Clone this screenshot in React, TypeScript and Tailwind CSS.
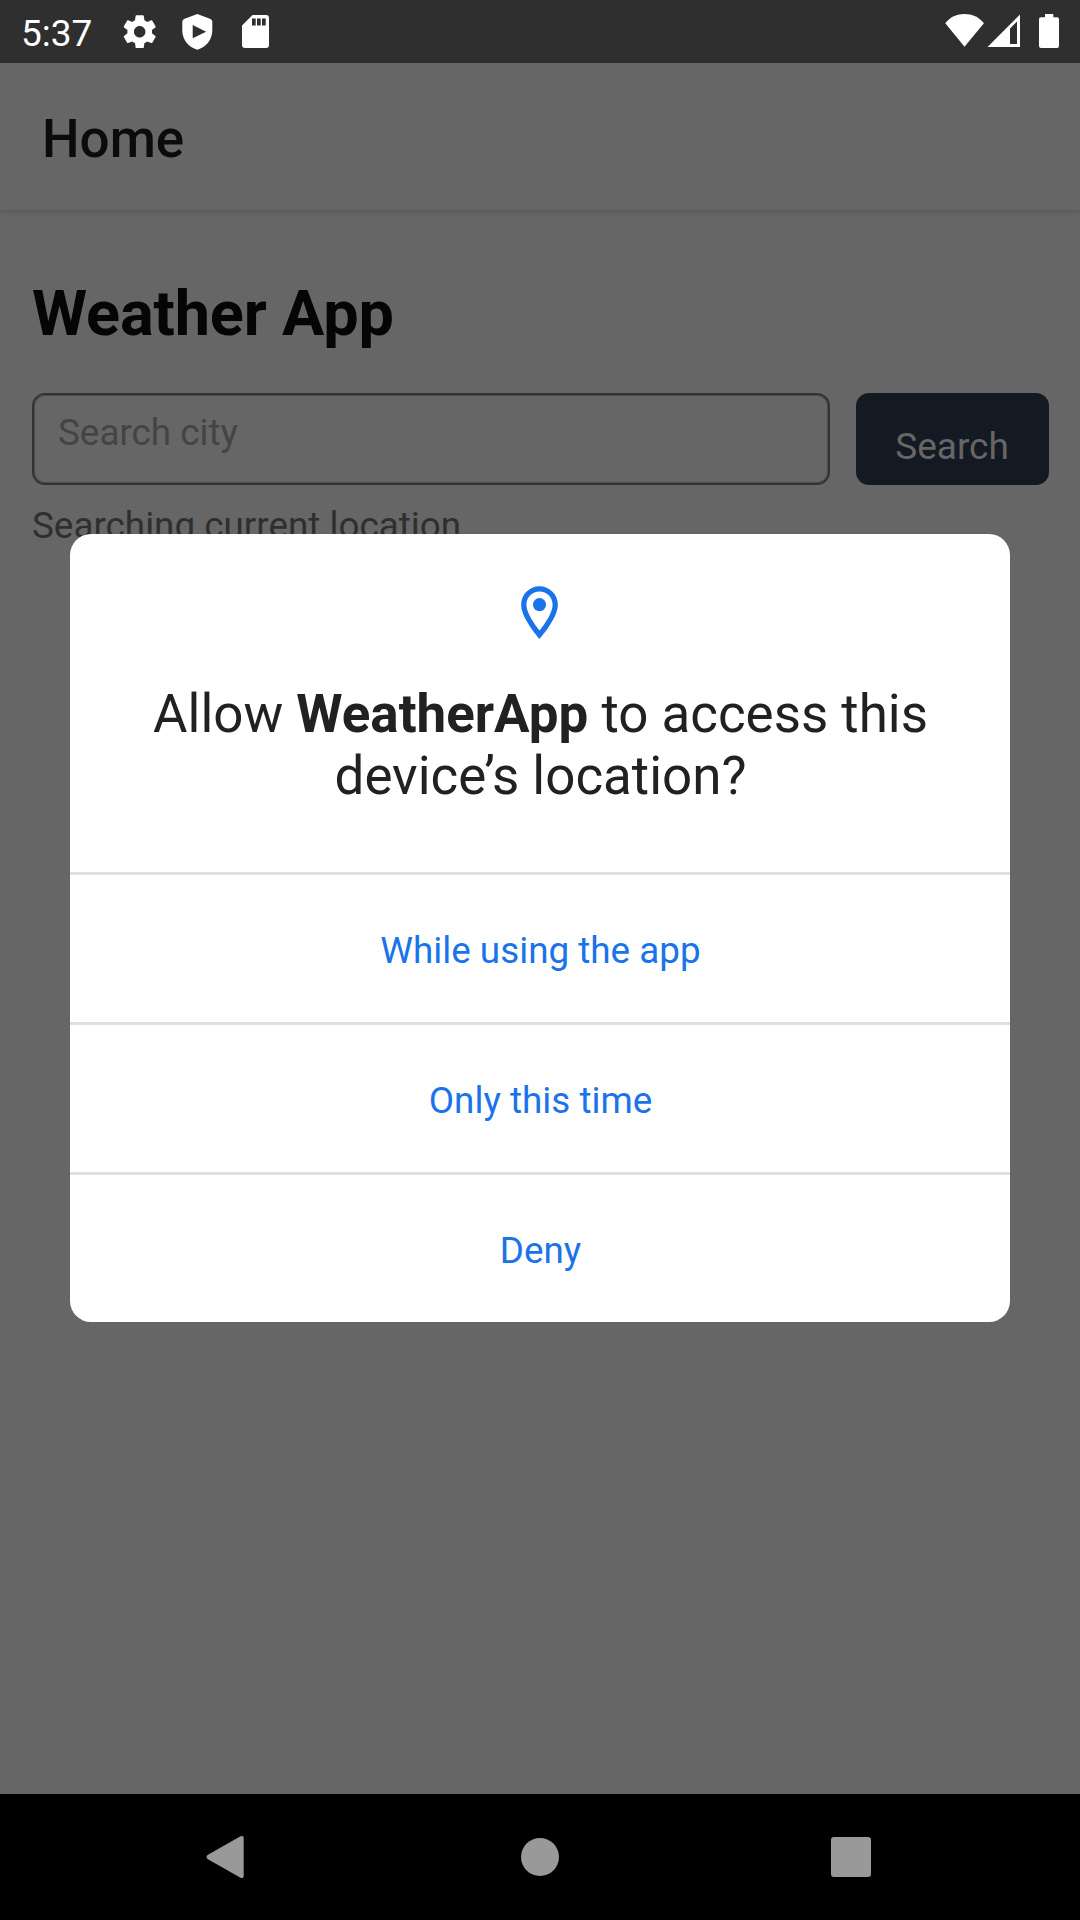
function StatusBar() {
  return (
    <div className="flex h-[63px] shrink-0 items-start bg-[#2f2f2f] text-white">
      <span className="w-[100px] pt-[2px] pl-[21px] text-[37px] leading-[63px]">5:37</span>
      <svg className="mt-3 ml-5 size-[39.4px]" viewBox="0 0 24 24" fill="currentColor">
        <path d="M19.430 12.980c.040-.320.070-.640.070-.980s-.030-.660-.070-.980l2.110-1.650c.190-.150.240-.420.120-.640l-2-3.460c-.120-.220-.390-.300-.610-.220l-2.490 1c-.520-.400-1.080-.730-1.690-.980l-.380-2.650C14.460 2.180 14.250 2 14 2h-4c-.250 0-.460.180-.490.420l-.380 2.650c-.610.250-1.170.590-1.690.980l-2.490-1c-.230-.090-.490 0-.610.220l-2 3.460c-.130.220-.070.490.120.640l2.110 1.650c-.040.320-.070.650-.070.980s.030.660.070.980l-2.110 1.650c-.190.150-.240.420-.120.640l2 3.460c.120.220.390.300.610.220l2.490-1c.520.400 1.080.730 1.690.980l.380 2.650c.030.240.240.420.490.420h4c.250 0 .460-.180.490-.420l.380-2.650c.610-.250 1.170-.590 1.690-.980l2.490 1c.230.090.490 0 .610-.220l2-3.460c.120-.220.070-.490-.120-.640l-2.110-1.650zM12 15.500c-1.930 0-3.500-1.570-3.500-3.500s1.570-3.500 3.500-3.500 3.500 1.570 3.500 3.500-1.570 3.500-3.500 3.500z" />
      </svg>
      <svg className="mt-[13px] ml-[22px] h-[38px] w-[32px]" viewBox="0 0 32 38" fill="currentColor">
        <path
          fillRule="evenodd"
          d="M16.3 1 29.5 6Q31.3 7 31.3 8.500V17.500C31.300 26.500 25 34.500 16.300 36.700C7.600 34.500 1.300 26.500 1.300 17.500V8.500Q1.300 7 3 6ZM11.700 12V25.300L25.100 18.700Z"
        />
      </svg>
      <svg className="mt-[14px] ml-[28px] h-[36px] w-[30px]" viewBox="0 0 30 36" fill="currentColor">
        <path
          fillRule="evenodd"
          d="M11.500 1H25.200Q28 1 28 4V31Q28 34 25.200 34H4Q1 34 1 31V11.500ZM11 4.500V11.600H14.700V4.500ZM16 4.500V11.600H19.700V4.500ZM21 4.500V11.600H24.700V4.500Z"
        />
      </svg>
      <svg className="mt-[13px] ml-auto h-[36px] w-[40px]" viewBox="0 0 40 36" fill="currentColor">
        <path d="M0.300 10.300C5 4 12 1 19.500 1S34 4 38.900 10.300L19.500 33.800Z" />
      </svg>
      <svg className="mt-[13px] ml-[2px] h-[36px] w-[34px]" viewBox="0 0 34 36" fill="currentColor">
        <path fillRule="evenodd" d="M0.500 34H33V1.500ZM23 31V15.500L30 8.500V31Z" />
      </svg>
      <svg className="mt-[13px] mr-5 ml-[17px] h-[36px] w-[22px]" viewBox="0 0 22 36" fill="currentColor">
        <path d="M7 1H15.300V4.300H19Q21 4.300 21 6.300V33Q21 35 19 35H3Q1 35 1 33V6.300Q1 4.300 3 4.300H7Z" />
      </svg>
    </div>
  );
}

function PermissionDialog() {
  const choices = ["While using the app", "Only this time", "Deny"];
  return (
    <div className="absolute top-[534px] left-[70px] flex w-[940px] flex-col overflow-hidden rounded-[21px] bg-white">
      <div className="flex h-[338px] flex-col items-center pt-[47px]">
        <svg className="mr-px size-[63px]" viewBox="0 0 24 24" fill="#1a73e8">
          <path d="M12 2C8.130 2 5 5.130 5 9c0 5.250 7 13 7 13s7-7.750 7-13c0-3.870-3.130-7-7-7zM7 9c0-2.760 2.240-5 5-5s5 2.240 5 5c0 2.880-2.880 7.190-5 9.880C9.920 16.210 7 11.850 7 9z" />
          <circle cx="12" cy="9" r="2.5" />
        </svg>
        <h2 className="mt-[39px] pl-px text-center text-[52.9px] leading-[62px] text-[#212121]">
          Allow <strong className="font-bold">WeatherApp</strong> to access this
          <br />
          device’s location?
        </h2>
      </div>
      {choices.map((label) => (
        <button
          key={label}
          className="h-[150px] border-t-[3px] border-[#e0e0e0] pt-[4px] pl-px text-[36.85px] leading-[42px] text-[#1a73e8]"
        >
          {label}
        </button>
      ))}
    </div>
  );
}

function NavigationBar() {
  return (
    <div className="flex h-[126px] shrink-0 items-center justify-between bg-black px-[205px] text-[#999]">
      <svg className="h-[44px] w-[40px]" viewBox="0 0 40 44" fill="currentColor">
        <path d="M2.500 20 35.500 1.300Q38.700 0 38.700 3V41Q38.700 44 35.500 42.700L2.500 24Q0.500 22 2.500 20Z" />
      </svg>
      <div className="ml-[4px] size-[38px] rounded-full bg-[#999]" />
      <div className="mr-[4px] size-[40px] rounded-[3px] bg-[#999]" />
    </div>
  );
}

export default function App() {
  return (
    <div className="relative flex h-[1920px] w-[1080px] flex-col overflow-hidden bg-[#666] font-['Roboto',sans-serif]">
      <StatusBar />
      <header className="flex h-[147px] shrink-0 items-center pl-[42px] shadow-[0_1px_5px_rgba(0,0,0,0.2)]">
        <h1 className="pt-[5px] text-[53px] leading-[62px] font-medium text-[#0b0b0b]">Home</h1>
      </header>
      <main className="flex flex-1 flex-col px-8 pt-[67px]">
        <h2 className="text-[63px] leading-[74px] font-bold tracking-[-0.15px] text-[#050505]">Weather App</h2>
        <div className="mt-[42px] flex h-[92px] justify-between">
          <div className="w-[798px] rounded-[13px] border-2 border-[#333] pt-[16px] pl-[24px] text-[36.85px] leading-[43px] text-[#444] shadow-[inset_0_0_0_1px_rgba(51,51,51,0.5)]">
            Search city
          </div>
          <button className="mr-[-1px] w-[193px] rounded-[13px] bg-[#131a23] pt-[14px] pr-px text-[37px] leading-[43px] text-[#666]">
            Search
          </button>
        </div>
        <p className="mt-[19px] text-[36.85px] leading-[43px] text-[#2f2f2f]">Searching current location</p>
      </main>
      <NavigationBar />
      <PermissionDialog />
    </div>
  );
}
